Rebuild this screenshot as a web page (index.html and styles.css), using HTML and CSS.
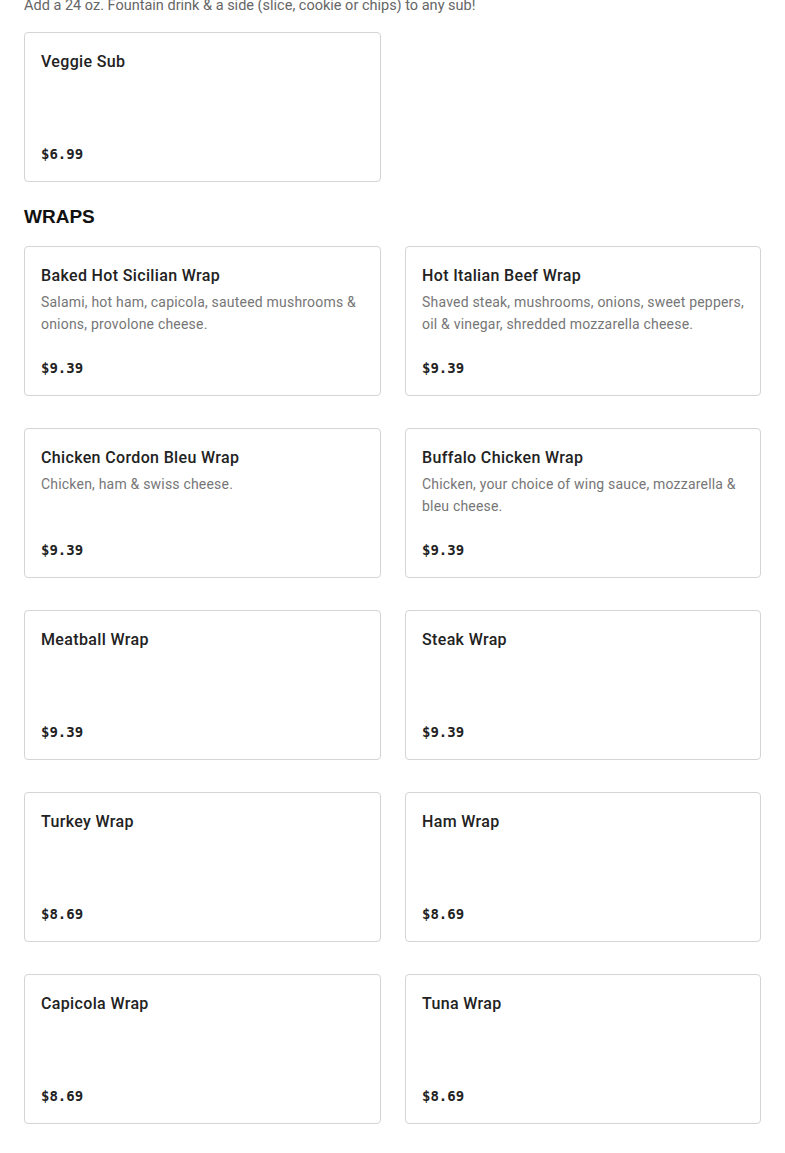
FILE: index.html
```html
<!DOCTYPE html>
<html>
<head>
<meta charset="utf-8">
<link rel="stylesheet" href="styles.css">
</head>
<body>
<div class="page">
  <p class="intro">Add a 24 oz. Fountain drink &amp; a side (slice, cookie or chips) to any sub!</p>
  <div class="grid">
    <div class="card"><div class="title">Veggie Sub</div><div class="price">$6.99</div></div>
  </div>

  <h2 class="section">WRAPS</h2>
  <div class="grid">
    <div class="card"><div class="title">Baked Hot Sicilian Wrap</div><div class="desc">Salami, hot ham, capicola, sauteed mushrooms &amp; onions, provolone cheese.</div><div class="price">$9.39</div></div>
    <div class="card"><div class="title">Hot Italian Beef Wrap</div><div class="desc">Shaved steak, mushrooms, onions, sweet peppers, oil &amp; vinegar, shredded mozzarella cheese.</div><div class="price">$9.39</div></div>
    <div class="card"><div class="title">Chicken Cordon Bleu Wrap</div><div class="desc">Chicken, ham &amp; swiss cheese.</div><div class="price">$9.39</div></div>
    <div class="card"><div class="title">Buffalo Chicken Wrap</div><div class="desc">Chicken, your choice of wing sauce, mozzarella &amp; bleu cheese.</div><div class="price">$9.39</div></div>
    <div class="card"><div class="title">Meatball Wrap</div><div class="price">$9.39</div></div>
    <div class="card"><div class="title">Steak Wrap</div><div class="price">$9.39</div></div>
    <div class="card"><div class="title">Turkey Wrap</div><div class="price">$8.69</div></div>
    <div class="card"><div class="title">Ham Wrap</div><div class="price">$8.69</div></div>
    <div class="card"><div class="title">Capicola Wrap</div><div class="price">$8.69</div></div>
    <div class="card"><div class="title">Tuna Wrap</div><div class="price">$8.69</div></div>
  </div>
</div>
</body>
</html>
```

FILE: styles.css
```css
html, body {
  margin: 0;
  padding: 0;
  background: #ffffff;
}

.page {
  padding: 0 24px 40px 24px;
  font-family: "Roboto", "Liberation Sans", sans-serif;
  color: #222222;
}

.intro {
  margin: -5px 0 0 0;
  font-size: 14.5px;
  line-height: 22px;
  color: #666666;
}

.grid {
  display: grid;
  grid-template-columns: 357px 356px;
  column-gap: 24px;
  row-gap: 32px;
  margin-top: 15px;
}

.card {
  box-sizing: border-box;
  height: 150px;
  border: 1px solid #d4d4d4;
  border-radius: 4px;
  padding: 17px 16px 15px 16px;
  display: flex;
  flex-direction: column;
}

.title {
  font-size: 16px;
  font-weight: 500;
  line-height: 24px;
  letter-spacing: 0.35px;
  color: #222222;
}

.desc {
  margin-top: 3px;
  margin-right: -8px;
  font-size: 14px;
  line-height: 22px;
  letter-spacing: 0.2px;
  color: #767676;
}

.price {
  margin-top: auto;
  font-family: "DejaVu Sans Mono", "Liberation Mono", monospace;
  font-weight: bold;
  font-size: 14px;
  line-height: 24px;
  color: #222222;
}

.section {
  margin: 23px 0 0 0;
  font-family: "Liberation Sans", Arial, sans-serif;
  font-weight: 900;
  font-size: 19px;
  line-height: 24px;
  color: #111111;
}

.section + .grid {
  margin-top: 17px;
}
```
